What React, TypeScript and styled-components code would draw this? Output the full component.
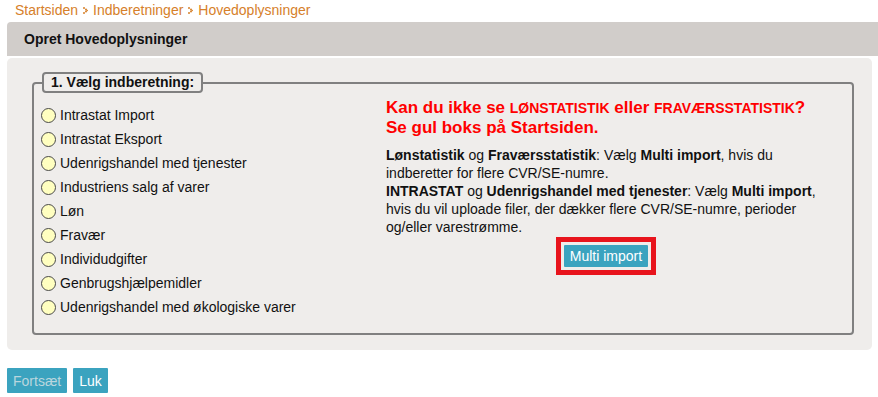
import React, {useState} from 'react';
import styled, {createGlobalStyle} from "styled-components";

const GlobalStyle = createGlobalStyle`
  body {
    margin: 0;
    background: #ffffff;
    font-family: "Liberation Sans", Arial, sans-serif;
    color: #111111;
  }
`

const Page = styled.div`
  padding: 0 0 0 7px;
  width: 871px;
`

const Breadcrumb = styled.nav`
  display: flex;
  align-items: center;
  gap: 5px;
  height: 20px;
  padding-left: 8px;
  font-size: 14px;
  color: #d6802a;

  a {
    color: inherit;
    text-decoration: none;
  }
`

const Header = styled.h1`
  margin: 2px 0 0;
  height: 34px;
  display: flex;
  align-items: center;
  padding-left: 17px;
  background: #d1cdca;
  border-radius: 4px 0 0 0;
  font-size: 14px;
  font-weight: 700;
`

const Panel = styled.section`
  margin-top: 2px;
  width: 865px;
  box-sizing: border-box;
  background: #efedeb;
  border-radius: 5px;
  padding: 14px 18px 15px 25px;
`

const Fieldset = styled.fieldset`
  margin: 0;
  border: 2px solid #808080;
  border-radius: 4px;
  padding: 0 0 12px 7px;
  display: grid;
  grid-template-columns: 345px 440px;
  min-width: 0;
  height: 263px;
  box-sizing: border-box;
`

const Legend = styled.legend`
  margin-left: 1px;
  padding: 0 7px 1px;
  line-height: 16px;
  border: 2px solid #808080;
  border-radius: 4px;
  background: #efedeb;
  font-size: 14px;
  font-weight: 700;
`

const RadioList = styled.ul`
  list-style: none;
  margin: 0;
  padding: 10px 0 0;
`

const RadioRow = styled.li`
  display: flex;
  align-items: center;
  gap: 4px;
  height: 24px;
  font-size: 14px;
  cursor: pointer;
`

const RadioDot = styled.span<{ $checked: boolean }>`
  width: 13px;
  height: 13px;
  border-radius: 50%;
  border: 1.5px solid #4a4a4a;
  background: ${p => p.$checked ? '#e8d84a' : '#ffffc0'};
  flex: none;
`

const InfoColumn = styled.div`
  padding-top: 5px;
`

const Warning = styled.p`
  margin: 0 0 8px;
  color: #ff0000;
  font-size: 17px;
  font-weight: 700;
  line-height: 20px;

  small {
    font-size: 14px;
  }
`

const Help = styled.p`
  margin: 0;
  font-size: 14px;
  line-height: 18px;
`

const ButtonFrame = styled.div`
  margin: 1px auto 0;
  width: fit-content;
  border: 5px solid #e8141c;
  padding: 3px;
  display: flex;
`

const TealButton = styled.button<{ $disabled?: boolean }>`
  border: none;
  border-radius: 1px;
  background: #3ba3bf;
  color: ${p => p.$disabled ? '#b9d6de' : '#ffffff'};
  font-family: "Liberation Sans", Arial, sans-serif;
  font-size: 14px;
  height: 22px;
  padding: 0 6px;
  cursor: pointer;
`

const Footer = styled.div`
  display: flex;
  gap: 6px;
  margin-top: 18px;

  button {
    height: 25px;
    font-size: 14px;
    padding: 0 6px;
  }
`

const Arrow = () => (
    <svg width="5" height="7" viewBox="0 0 5 7">
        <circle cx="1" cy="1" r="1" fill="#d6802a"/>
        <circle cx="1" cy="6" r="1" fill="#d6802a"/>
        <circle cx="3" cy="2.5" r="1" fill="#d6802a"/>
        <circle cx="3" cy="4.5" r="1" fill="#d6802a"/>
        <circle cx="4.2" cy="3.5" r="0.8" fill="#d6802a"/>
    </svg>
)

const options = [
    'Intrastat Import',
    'Intrastat Eksport',
    'Udenrigshandel med tjenester',
    'Industriens salg af varer',
    'Løn',
    'Fravær',
    'Individudgifter',
    'Genbrugshjælpemidler',
    'Udenrigshandel med økologiske varer',
]

const App = () => {
    const [selected, setSelected] = useState<number | null>(null)
    return (
        <Page>
            <GlobalStyle/>
            <Breadcrumb>
                <a href="#">Startsiden</a>
                <Arrow/>
                <a href="#">Indberetninger</a>
                <Arrow/>
                <a href="#">Hovedoplysninger</a>
            </Breadcrumb>
            <Header>Opret Hovedoplysninger</Header>
            <Panel>
                <Fieldset>
                    <Legend>1. Vælg indberetning:</Legend>
                    <RadioList>
                        {options.map((label, index) => (
                            <RadioRow key={index} onClick={() => setSelected(index)}>
                                <RadioDot $checked={selected === index}/>
                                {label}
                            </RadioRow>
                        ))}
                    </RadioList>
                    <InfoColumn>
                        <Warning>
                            Kan du ikke se <small>LØNSTATISTIK</small> eller <small>FRAVÆRSSTATISTIK</small>?
                            <br/>Se gul boks på Startsiden.
                        </Warning>
                        <Help>
                            <b>Lønstatistik</b> og <b>Fraværsstatistik</b>: Vælg <b>Multi import</b>, hvis du
                            indberetter for flere CVR/SE-numre.
                            <br/>
                            <b>INTRASTAT</b> og <b>Udenrigshandel med tjenester</b>: Vælg <b>Multi import</b>,
                            hvis du vil uploade filer, der dækker flere CVR/SE-numre, perioder og/eller varestrømme.
                        </Help>
                        <ButtonFrame>
                            <TealButton>Multi import</TealButton>
                        </ButtonFrame>
                    </InfoColumn>
                </Fieldset>
            </Panel>
            <Footer>
                <TealButton $disabled>Fortsæt</TealButton>
                <TealButton>Luk</TealButton>
            </Footer>
        </Page>
    );
};

export default App;
